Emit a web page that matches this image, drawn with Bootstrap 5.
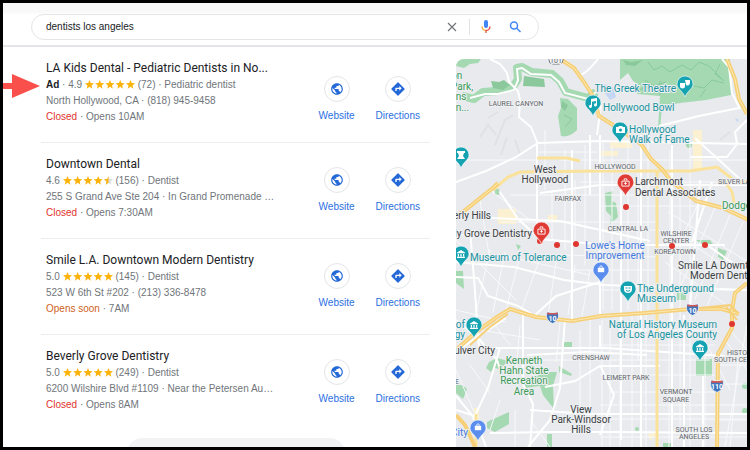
<!DOCTYPE html>
<html lang="en">
<head>
<meta charset="utf-8">
<meta name="viewport" content="width=device-width, initial-scale=1">
<title>dentists los angeles</title>
<link href="https://cdn.jsdelivr.net/npm/bootstrap@5.3.0/dist/css/bootstrap.min.css" rel="stylesheet">
<style>
body{background:#000;font-family:"Liberation Sans",Arial,sans-serif;font-size:10px;line-height:16px;color:#70757a}
.frame{height:100vh;padding:3px}
.sheet{background:#fff}
.topbar{padding:11px 0 5px 28px;border-bottom:2px solid #e3e5e8;background:linear-gradient(#f8f8f8 0 8px,#fff 12px)}
.searchbox{width:71%;height:26px;border:1px solid #e4e5e8;border-radius:13px;background:#fff;padding:0 16px 0 14px}
.searchbox input{font-size:10px;line-height:16px;color:#202124;outline:0}
.searchbox button{line-height:0}
.vbar{width:1px;height:16px;margin:0 10px 0 12px;background:#dfe1e5}
.board{display:grid;grid-template-columns:minmax(0,453fr) minmax(0,291fr);grid-template-rows:minmax(0,1fr);min-height:0}
.results{padding:0 26px 0 38px}
.entry{padding:12px 0 17px 5px;border-bottom:1px solid #ebedef}
.entry:last-of-type{border-bottom:0}
.entry h2{font-family:Roboto,sans-serif;font-size:12px;font-weight:400;line-height:18px;color:#202124;margin:0}
.entry p{margin:0}
.about{width:240px}
.ad{color:#202124}
.closed{color:#e0332c}
.soon{color:#cf5f1b}
.stars{width:50px;height:10px}
.actions{padding:12px 10px 0 0;gap:21px}
.entry:first-child .actions{padding-top:17px}
.actions a{color:#2a6fdf;gap:6px}
.ring{width:26px;height:26px;border:1px solid #e3e5e8}
.more{width:218px;height:30px;border-radius:15px;background:#f1f3f4}
.map{margin-top:12px;border-top-left-radius:8px;background:#e8eaed}
.map text{font-family:Roboto,sans-serif;paint-order:stroke;stroke:#eef0f2;stroke-width:2px;stroke-linejoin:round}
.town{font-size:10px;fill:#3c4043}
.area{font-size:7px;fill:#5f6368}
.poi{font-size:10px;fill:#1792a0}
.shop{font-size:10px;fill:#4479e0}
.park{font-size:10px;fill:#3c9a58}
.map .sign{font-size:7px;font-weight:700;fill:#fff;stroke:none}
.arrow{left:3px;top:74px}
</style>
<script src="https://cdn.jsdelivr.net/npm/bootstrap@5.3.0/dist/js/bootstrap.bundle.min.js"></script>
</head>
<body>
<svg class="d-none" aria-hidden="true">
  <symbol id="star" viewBox="0 0 24 24"><path d="M12 18.3 4.6 23l2-8.600L0 8.700l8.700-.7L12 0l3.300 8 8.700.7-6.600 5.700 2 8.600z"/></symbol>
  <symbol id="five" viewBox="0 0 50 10"><g fill="#fbb30c"><use href="#star" width="9" height="9"/><use href="#star" x="10.200" width="9" height="9"/><use href="#star" x="20.500" width="9" height="9"/><use href="#star" x="30.700" width="9" height="9"/><use href="#star" x="41" width="9" height="9"/></g></symbol>
  <symbol id="fourhalf" viewBox="0 0 50 10"><g fill="#fbb30c"><use href="#star" width="9" height="9"/><use href="#star" x="10.200" width="9" height="9"/><use href="#star" x="20.500" width="9" height="9"/><use href="#star" x="30.700" width="9" height="9"/></g><use href="#star" x="41" width="9" height="9" fill="#dadce0"/><svg x="41" width="4.500" height="9" viewBox="0 0 4.500 9"><use href="#star" width="9" height="9" fill="#fbb30c"/></svg></symbol>
  <symbol id="globe" viewBox="0 0 24 24"><path fill="#2468d8" d="M12 2C6.480 2 2 6.480 2 12s4.480 10 10 10 10-4.480 10-10S17.520 2 12 2zm-1 17.930c-3.950-.49-7-3.850-7-7.930 0-.62.080-1.210.21-1.790L9 15v1c0 1.100.9 2 2 2v1.930zm6.900-2.540c-.26-.81-1-1.390-1.900-1.390h-1v-3c0-.55-.45-1-1-1H8v-2h2c.55 0 1-.45 1-1V7h2c1.100 0 2-.9 2-2v-.41c2.930 1.190 5 4.060 5 7.410 0 2.080-.8 3.970-2.100 5.390z"/></symbol>
  <symbol id="turn" viewBox="0 0 24 24"><path fill="#2468d8" d="m21.710 11.290-9-9a1 1 0 0 0-1.410 0l-9 9a1 1 0 0 0 0 1.410l9 9c.39.39 1.020.39 1.410 0l9-9a1 1 0 0 0 0-1.410zM14 14.500V12h-4v3H8v-4c0-.55.45-1 1-1h5V7.500l3.500 3.500-3.500 3.500z"/></symbol>
  <symbol id="pin" viewBox="0 0 16 21" overflow="visible"><path stroke="#fff" stroke-opacity=".6" d="M8 0a8 8 0 0 1 8 8c0 5-5.500 6.500-8 13C5.500 14.500 0 13 0 8a8 8 0 0 1 8-8z"/></symbol>
  <symbol id="temple" viewBox="0 0 10 10"><path fill="#fff" d="M5 0 0 3v1h10V3zM1 5h1.500v3H1zm3.200 0h1.600v3H4.200zm3.300 0H9v3H7.500zM0 8.500h10V10H0z"/></symbol>
  <symbol id="bag" viewBox="0 0 10 10"><path fill="none" stroke="#fff" d="M3.500 4V2.500a1.500 1.500 0 0 1 3 0V4"/><path fill="#fff" d="M1 3.500h8V9H1z"/></symbol>
  <symbol id="clinic" viewBox="0 0 10 10"><path fill="none" stroke="#fff" d="M1 9V3.500h8V9zM3.500 3V1h3v2M5 4.500v3M3.500 6h3"/></symbol>
  <symbol id="shield" viewBox="0 0 12 12"><path fill="#3f75bd" stroke="#fff" stroke-width=".6" d="M1 1q5 1.500 10 0c1.500 5 0 8-5 10.500C1 9-.5 6 1 1z"/><path fill="#d85450" d="M1.400 1.300q4.600 1.300 9.200 0l.3 1.900H1.100z"/></symbol>
</svg>

<div class="frame">
<div class="sheet h-100 overflow-hidden d-flex flex-column">
  <header class="topbar">
    <form class="searchbox d-flex align-items-center" role="search" onsubmit="return false">
      <input class="flex-grow-1 border-0 p-0 bg-transparent" type="text" value="dentists los angeles" aria-label="Search">
      <button class="btn border-0 p-0" type="reset" aria-label="Clear"><svg width="10" height="10" viewBox="0 0 10 10"><path stroke="#70757a" stroke-width="1.200" d="m1 1 8 8M9 1 1 9"/></svg></button>
      <span class="vbar"></span>
      <button class="btn border-0 p-0" type="button" aria-label="Voice search"><svg width="12" height="14" viewBox="0 0 12 14"><rect x="4" width="4" height="8" rx="2" fill="#4285f4"/><path fill="none" stroke="#ea4335" stroke-width="1.300" d="M6 10.500A4 4 0 0 0 10 6.500"/><path fill="none" stroke="#f6a623" stroke-width="1.300" d="M2 6.500a4 4 0 0 0 4 4"/><path stroke="#d9674b" stroke-width="1.400" d="M6 10v3"/></svg></button>
      <button class="btn border-0 p-0 ms-3" type="submit" aria-label="Search"><svg width="14" height="12" viewBox="0 0 14 12"><g fill="none" stroke="#4285f4" stroke-width="1.500"><circle cx="6" cy="4.500" r="3.500"/><path d="m8.500 7 4 4"/></g></svg></button>
    </form>
  </header>

  <main class="board flex-grow-1">
    <section class="results">
      <article class="entry d-flex">
        <div class="about text-nowrap">
          <h2>LA Kids Dental - Pediatric Dentists in No...</h2>
          <p><b class="ad">Ad</b> · 4.9 <svg class="stars"><use href="#five"/></svg> (72) · Pediatric dentist</p>
          <p>North Hollywood, CA · (818) 945-9458</p>
          <p><span class="closed">Closed</span> · Opens 10AM</p>
        </div>
        <div class="actions d-flex ms-auto">
          <a href="#" class="d-flex flex-column align-items-center text-decoration-none"><span class="ring rounded-circle d-flex align-items-center justify-content-center"><svg width="14" height="14"><use href="#globe"/></svg></span>Website</a>
          <a href="#" class="d-flex flex-column align-items-center text-decoration-none"><span class="ring rounded-circle d-flex align-items-center justify-content-center"><svg width="16" height="16"><use href="#turn"/></svg></span>Directions</a>
        </div>
      </article>
      <article class="entry d-flex">
        <div class="about text-nowrap">
          <h2>Downtown Dental</h2>
          <p>4.6 <svg class="stars"><use href="#fourhalf"/></svg> (156) · Dentist</p>
          <p>255 S Grand Ave Ste 204 · In Grand Promenade …</p>
          <p><span class="closed">Closed</span> · Opens 7:30AM</p>
        </div>
        <div class="actions d-flex ms-auto">
          <a href="#" class="d-flex flex-column align-items-center text-decoration-none"><span class="ring rounded-circle d-flex align-items-center justify-content-center"><svg width="14" height="14"><use href="#globe"/></svg></span>Website</a>
          <a href="#" class="d-flex flex-column align-items-center text-decoration-none"><span class="ring rounded-circle d-flex align-items-center justify-content-center"><svg width="16" height="16"><use href="#turn"/></svg></span>Directions</a>
        </div>
      </article>
      <article class="entry d-flex">
        <div class="about text-nowrap">
          <h2>Smile L.A. Downtown Modern Dentistry</h2>
          <p>5.0 <svg class="stars"><use href="#five"/></svg> (145) · Dentist</p>
          <p>523 W 6th St #202 · (213) 336-8478</p>
          <p><span class="soon">Opens soon</span> · 7AM</p>
        </div>
        <div class="actions d-flex ms-auto">
          <a href="#" class="d-flex flex-column align-items-center text-decoration-none"><span class="ring rounded-circle d-flex align-items-center justify-content-center"><svg width="14" height="14"><use href="#globe"/></svg></span>Website</a>
          <a href="#" class="d-flex flex-column align-items-center text-decoration-none"><span class="ring rounded-circle d-flex align-items-center justify-content-center"><svg width="16" height="16"><use href="#turn"/></svg></span>Directions</a>
        </div>
      </article>
      <article class="entry d-flex">
        <div class="about text-nowrap">
          <h2>Beverly Grove Dentistry</h2>
          <p>5.0 <svg class="stars"><use href="#five"/></svg> (249) · Dentist</p>
          <p>6200 Wilshire Blvd #1109 · Near the Petersen Au…</p>
          <p><span class="closed">Closed</span> · Opens 8AM</p>
        </div>
        <div class="actions d-flex ms-auto">
          <a href="#" class="d-flex flex-column align-items-center text-decoration-none"><span class="ring rounded-circle d-flex align-items-center justify-content-center"><svg width="14" height="14"><use href="#globe"/></svg></span>Website</a>
          <a href="#" class="d-flex flex-column align-items-center text-decoration-none"><span class="ring rounded-circle d-flex align-items-center justify-content-center"><svg width="16" height="16"><use href="#turn"/></svg></span>Directions</a>
        </div>
      </article>
      <button type="button" class="more btn border-0 d-block mx-auto mt-2" aria-label="More businesses"></button>
    </section>

    <section class="map overflow-hidden" aria-label="Map of Los Angeles">
      <svg class="d-block w-100 h-100" viewBox="456 59 291 388" preserveAspectRatio="xMinYMin slice">
        <!-- parks -->
        <g fill="#a5d9b2">
          <path d="M456 59h25l-3 4-8 1-6 4-8-2zM620 59h110l1 36-25 5-26 3-18 3-2 23h-2l2-33-23-2 1-10-5-3-5-8-8 7z"/>
          <path d="M560 98l8 1 9 9v22q-8 8-16 6l-3-20 3-8zM605 193l8-2-1 10 4 2 2 14-8 7 1-8-5-5zM563 342h9v6h-9zM696 359h16v17h-16zM489 362l8-4 11 3-8 8-6-1-3 4-5-4zM525 382l20-10h12l-4 14 1 23-11-14-3-9-16 2zM559 366l13 8-1 2-12-4zM487 422l22-10v12l-14 8-8-4zM456 385h6l5 4-4 10-7-6zM456 271h7l1 18-8-6zM547 434h5v13h-5zM677 292h9v8h-9zM663 443h9v4h-9zM696 240h14l3 4-6 3zM718 248l9 3-4 9-5-3z"/>
          <circle cx="689" cy="145" r="3"/><circle cx="637" cy="429" r="2"/><circle cx="745" cy="386" r="3"/><circle cx="745" cy="411" r="3"/><path d="M516 244l5 2-3 4zM495 189h4v6h-4z"/>
        </g>
        <g fill="none" stroke="#a5d9b2" stroke-width="8" stroke-linejoin="round"><path d="M462 96l12 3 9-7 14-1 16-4 5-8-1-11 5-1 10 5 20 2 8 7 6 11 22 6 8-6"/></g>
        <path fill="#8bc99c" d="M524 76l20 3 1 8-22-1zM491 81l8 1 5-2 6 5-7 5-10-2zM623 60l8 2 12-2-8 6-9-1zM562 101l6 4-3 6-4-4z"/>
        <g fill="none" stroke="#88c99a" stroke-width="1"><path d="M648 62l6 8 8-4 8 6 12-7 9 5 8-8 10 4 15 15M645 80l9 6 12-4M694 86l10 2 8-8 12 3M700 97l6-8M640 90l10-6M660 95v-14M720 64l-5 10 8 6M564 115l8 4-7 8"/></g>
        <path fill="#c5d7f5" d="M604 84l9 3 3 10-6 3-6-8zM735 118l4 2-2 2z"/>
        <g fill="#fbf0cf"><path d="M498 209h18v15h-18zM548 215h9v7h-9zM610 142h22v6h-22zM600 151h18v5h-18zM693 130h9v40h-9zM474 408h5v13h-5zM648 434l14-2-12 8z"/></g>
        <g fill="none" stroke="#dfe1e4" stroke-width="2"><path d="M480 137l8-12 8 10M495 145l10-25 8-5M501 155l6-18M515 140l5 14M488 118l10-6M720 140l10-8"/></g>
        <!-- minor streets -->
        <g fill="none" stroke="#f8f9fb" stroke-width="1">
          <path d="M456 160h80M537 152h60M560 160h190M580 182h167M510 195h147M500 222h157M600 206h147M600 230h60M560 255l98 2M575 270h82M600 290h147M500 255l90 20M456 240l60 60M490 250l-20 90M505 252l-12 60M520 256l-14 54M540 258l-18 50M556 262l-8 54M575 265l-7 50M590 270l-8 46"/>
          <path d="M545 130v60M552 190v50M565 150v100M575 180v65M585 145v120M603 140v170M612 145v165M628 140v170M638 170v190M648 140v170M670 150v180M680 180v260M690 140v180M602 320v127M610 330v117M620 320v127M632 315v132M646 315v132M669 320v127M690 325v122M705 320v127"/>
          <path d="M620 330h90M600 345h115M540 360h170M600 375h115M610 392h105M600 405h147M600 419h147M600 437h147M718 365h29M718 384h29M718 420h29M668 212l80 50M672 230l75 52M665 262l60 42M700 200l-30 62M715 208l-35 80M730 215l-35 84M743 222l-36 84M730 330l17 20M725 340l22 30M747 325l-22 122M738 360l-8 87M700 330l30 60"/>
          <path d="M470 365l20 28M456 370l18 42M480 330l60 10M495 325l15 20M520 325l-5 60M560 322l-4 40M456 310l50 12M490 190l40 30M480 200l10 60M456 236l40-6M465 340l-9 14M500 400l-10 30M515 410v37M530 420l20 27M580 330v80M590 320v100"/>
        </g>
        <!-- main streets -->
        <g fill="none" stroke="#fff" stroke-width="2">
          <path d="M490 59l10 5 7 9 2 9 9 9 2 9-1 17 12 10 6 15v18M456 182l30-11 30-14 22-14 60-2 149 3M598 59q-12 15-18 16M470 98l15-4h13l16-4 4-10-1-11 5-1 9 6 20 1 8 7 6 11 23 6 8-7M722 59l7 8 3 26 8 16M659 126l40-10 40-8M537 152v30M597 135l4-30M590 135v60M747 120l-12 12 2 12-10 13-36 0M695 138l48 44"/>
          <path d="M500 192l18 27 22 20 68 6M490 218l70 3 90 20M537 171v60M572 150v170M600 135v180M621 190v250M641 135v312M712 182l-20 60M456 262l58 5 50 13 40 5 143 5M470 230l4 48 5 70M456 277l22 1 10 18 30 10 22 13M600 282l-44 14-22 20M657 245h50l40 28M605 245h120M540 193l60-8h147M672 145v302M700 180l-10 128"/>
          <path d="M523 312v72l10 20-3 43M565 318l-5 70-10 32-22 27M600 325v22M485 348h120l120 8M500 348l-12 40-15 32M456 320l24 20 17 20 4 12M456 352l20-14 30-20M527 355l60-3 60 3M545 387l30-6 25-15h60M456 410l22 7M490 433l60-1h60l137 1M600 365l14 30-14 40M530 410l60 4h157M684 315v132M703 376v71M456 396l20 24 10 27"/>
        </g>
        <!-- arterials and freeways -->
        <g fill="none" stroke="#fbe29b" stroke-width="3">
          <path d="M493 190l15-13 12-5 80-1h90l27-4 18 14 15 2M657 171v276M537 158h30l13 3M724 180l8 12 3 16M476 414v33"/>
        </g>
        <g fill="none" stroke="#f6cf76" stroke-width="4"><path d="M456 216l8-5 30-24 4-4M560 59l14 9 10 14 9 14 6 20 14 9 28 19 10 15 11 10 9 12 25 20 27 7 34 16M727 59l8 20 4 20 8 15M456 350l20-18 21-15 13-8 26 8 36 4 29-5 44-3 46-4h31l17 5M747 283l-12 10-3 17v18l-14 26-1 93M456 415l9 10 10 22"/></g>
        <g fill="none" stroke="#fde9b3" stroke-width="1"><path d="M456 216l8-5 30-24 4-4M560 59l14 9 10 14 9 14 6 20 14 9 28 19 10 15 11 10 9 12 25 20 27 7 34 16M727 59l8 20 4 20 8 15M456 350l20-18 21-15 13-8 26 8 36 4 29-5 44-3 46-4h31l17 5M747 283l-12 10-3 17v18l-14 26-1 93"/></g>
        <path fill="none" stroke="#f6cf76" stroke-width="2" d="M470 345l20-18 18-13M700 308l30-3 8 8M725 305l12 15"/>

        <rect x="549" y="53" width="14" height="11" rx="4" fill="#fff" stroke="#777"/>
        <text class="area" x="556" y="63" text-anchor="middle">101</text>

        <!-- labels -->
        <g class="park">
          <text x="451" y="79">on</text><text x="451" y="90">Park,</text><text x="450" y="100">ons</text><text x="450" y="111">on...</text>
          <g text-anchor="middle"><text x="524" y="364">Kenneth</text><text x="524" y="374">Hahn State</text><text x="524" y="384">Recreation</text><text x="524" y="395">Area</text></g>
          <text x="722" y="209">Dodger</text>
        </g>
        <g class="area" text-anchor="middle">
          <text x="516" y="106">LAUREL CANYON</text><text x="615" y="169">HOLLYWOOD</text><text x="568" y="201">FAIRFAX</text>
          <text x="628" y="231">CENTRAL LA</text><text x="676" y="236">WILSHIRE</text><text x="676" y="243">CENTER</text><text x="675" y="254">KOREATOWN</text>
          <text x="591" y="360">CRENSHAW</text><text x="626" y="380">LEIMERT PARK</text><text x="676" y="394">VERMONT</text><text x="676" y="402">SQUARE</text>
          <text x="694" y="432">SOUTH LOS</text><text x="694" y="439">ANGELES</text>
        </g>
        <g class="area"><text x="718" y="184">SILVER LAKE</text><text x="727" y="355">HISTORIC</text><text x="714" y="362">SOUTH CENTRAL</text><text x="455" y="384">E</text></g>
        <g class="town">
          <text x="545" y="173" text-anchor="middle">West</text><text x="545" y="183" text-anchor="middle">Hollywood</text>
          <text x="491" y="219" text-anchor="end">Beverly Hills</text><text x="532" y="237" text-anchor="end">Beverly Grove Dentistry</text>
          <text x="635" y="185">Larchmont</text><text x="635" y="196">Dental Associates</text>
          <text x="678" y="269">Smile LA Downtown</text><text x="690" y="279">Modern Dentistry</text>
          <text x="495" y="354" text-anchor="end">Culver City</text>
          <g text-anchor="middle"><text x="581" y="413">View</text><text x="581" y="423">Park-Windsor</text><text x="581" y="433">Hills</text></g>
        </g>
        <g class="poi">
          <text x="676" y="92" text-anchor="end">The Greek Theatre</text><text x="603" y="111">Hollywood Bowl</text>
          <text x="629" y="133">Hollywood</text><text x="629" y="143">Walk of Fame</text>
          <text x="470" y="261">Museum of Tolerance</text><text x="637" y="292">The Underground</text><text x="637" y="302">Museum</text>
          <text x="717" y="328" text-anchor="end">Natural History Museum</text><text x="717" y="338" text-anchor="end">of Los Angeles County</text>
          <text x="465" y="328" text-anchor="end">of</text><text x="465" y="338" text-anchor="end">gy</text>
        </g>
        <g class="shop"><text x="615" y="249" text-anchor="middle">Lowe's Home</text><text x="615" y="259" text-anchor="middle">Improvement</text><text x="468" y="436" text-anchor="end">City</text></g>

        <!-- route dots -->
        <g fill="#df3730"><circle cx="540" cy="241" r="3"/><circle cx="557" cy="245" r="3"/><circle cx="576" cy="244" r="3"/><circle cx="626" cy="207" r="3"/><circle cx="672" cy="246" r="3"/><circle cx="705" cy="245" r="3"/><circle cx="732" cy="324" r="3"/></g>
        <!-- pins -->
        <g fill="#15a3b2">
          <use href="#pin" x="677" y="76" width="16" height="21"/><use href="#pin" x="585" y="95" width="16" height="21"/><use href="#pin" x="612" y="122" width="16" height="21"/>
          <use href="#pin" x="453" y="147" width="16" height="21"/><use href="#pin" x="453" y="246" width="16" height="21"/><use href="#pin" x="620" y="281" width="16" height="21"/>
          <use href="#pin" x="466" y="317" width="16" height="21"/><use href="#pin" x="692" y="340" width="16" height="21"/>
        </g>
        <g fill="#e03a34"><use href="#pin" x="617" y="174" width="17" height="22"/><use href="#pin" x="533" y="222" width="17" height="22"/></g>
        <g fill="#5b8def"><use href="#pin" x="593" y="262" width="16" height="21"/><use href="#pin" x="470" y="420" width="16" height="21"/></g>
        <use href="#clinic" x="621" y="178" width="9" height="9"/><use href="#clinic" x="537" y="226" width="9" height="9"/>
        <use href="#bag" x="597" y="265" width="8" height="8"/><use href="#bag" x="474" y="423" width="8" height="8"/>
        <use href="#temple" x="457" y="250" width="8" height="8"/><use href="#temple" x="470" y="321" width="8" height="8"/><use href="#temple" x="696" y="344" width="8" height="8"/>
        <g fill="#fff"><path d="M680 83h5v3a2.500 2.500 0 0 1-5 0zM685 80h5v3a2.500 2.500 0 0 1-4 2zM591 99l6-1v7a1.500 1.500 0 1 1-1-1.500V101l-4 .8v4.700a1.500 1.500 0 1 1-1-1.500zM616 127h2l1-1h3l1 1h2v6h-9zM457 151h8v2h-1l-1 3 2 3h-8l2-3-1-3h-1z"/><path d="M624 286h8v3a4 4 0 0 1-8 0z"/></g>
        <circle cx="620.500" cy="130" r="1.600" fill="#15a3b2"/><path stroke="#15a3b2" fill="none" d="M625.500 288h2m1 0h2M626 290.500q2 1.500 4 0"/>
        <!-- highway shields -->
        <use href="#shield" x="546" y="311" width="13" height="13"/><use href="#shield" x="686" y="303" width="13" height="13"/><use href="#shield" x="709" y="379" width="16" height="14"/>
        <g text-anchor="middle"><text class="sign" x="552.500" y="321">10</text><text class="sign" x="692.500" y="313">10</text><text class="sign" x="717" y="389">110</text></g>
      </svg>
    </section>
  </main>
</div>
</div>
<svg class="arrow position-absolute" width="37" height="24" viewBox="0 0 37 24" aria-hidden="true"><path fill="#f9504c" d="M0 9h9V0l28 12L9 24v-9H0z"/></svg>
</body>
</html>
